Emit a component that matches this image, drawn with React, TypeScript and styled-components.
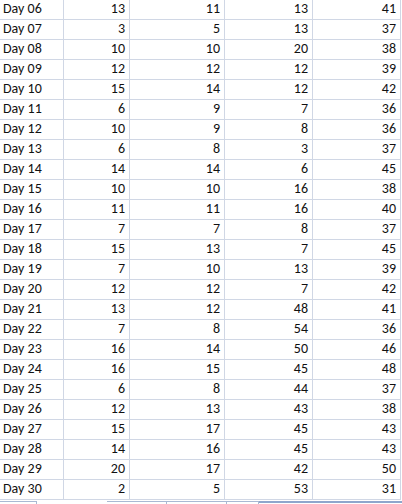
import React from "react";
import styled, { createGlobalStyle } from "styled-components";

const Global = createGlobalStyle`
  html, body { margin: 0; padding: 0; background: #fff; }
  body { font-family: Carlito, Lato, "Liberation Sans", sans-serif; }
`;

const data: [string, number, number, number, number][] = [
  ["Day 06", 13, 11, 13, 41],
  ["Day 07", 3, 5, 13, 37],
  ["Day 08", 10, 10, 20, 38],
  ["Day 09", 12, 12, 12, 39],
  ["Day 10", 15, 14, 12, 42],
  ["Day 11", 6, 9, 7, 36],
  ["Day 12", 10, 9, 8, 36],
  ["Day 13", 6, 8, 3, 37],
  ["Day 14", 14, 14, 6, 45],
  ["Day 15", 10, 10, 16, 38],
  ["Day 16", 11, 11, 16, 40],
  ["Day 17", 7, 7, 8, 37],
  ["Day 18", 15, 13, 7, 45],
  ["Day 19", 7, 10, 13, 39],
  ["Day 20", 12, 12, 7, 42],
  ["Day 21", 13, 12, 48, 41],
  ["Day 22", 7, 8, 54, 36],
  ["Day 23", 16, 14, 50, 46],
  ["Day 24", 16, 15, 45, 48],
  ["Day 25", 6, 8, 44, 37],
  ["Day 26", 12, 13, 43, 38],
  ["Day 27", 15, 17, 45, 43],
  ["Day 28", 14, 16, 45, 43],
  ["Day 29", 20, 17, 42, 50],
  ["Day 30", 2, 5, 53, 31],
];

const Sheet = styled.div`
  width: 402px;
  height: 504px;
  overflow: hidden;
  display: flex;
  flex-direction: column;
`;

const Grid = styled.div`
  display: grid;
  grid-template-columns: 64px 66px 95px 88px 88px;
  grid-auto-rows: 20px;
`;

const Cell = styled.div<{ $num?: boolean }>`
  box-sizing: border-box;
  border-right: 1px solid #d0d7e5;
  border-bottom: 1px solid #d0d7e5;
  display: flex;
  align-items: flex-end;
  justify-content: ${(p) => (p.$num ? "flex-end" : "flex-start")};
  padding: 0 ${(p) => (p.$num ? "4px" : "0")} 2px ${(p) => (p.$num ? "0" : "3px")};
  font-size: 14px;
  line-height: 16px;
  color: #111;
  white-space: nowrap;
`;

const TabBar = styled.div`
  display: flex;
  height: 4px;
  margin-top: 1px;
`;

const Tab = styled.div<{ $w: number; $gap?: number }>`
  box-sizing: border-box;
  width: ${(p) => p.$w}px;
  margin-left: ${(p) => p.$gap ?? 0}px;
  border-top: 1px solid #a9b9d3;
  border-right: 1px solid #a9b9d3;
`;

const TabRest = styled.div`
  flex: 1;
  border-top: 2px solid #8ea6cc;
`;

export default function App() {
  return (
    <Sheet>
      <Global />
      <Grid>
        {data.map((r) => (
          <React.Fragment key={r[0]}>
            <Cell>{r[0]}</Cell>
            <Cell $num>{r[1]}</Cell>
            <Cell $num>{r[2]}</Cell>
            <Cell $num>{r[3]}</Cell>
            <Cell $num>{r[4]}</Cell>
          </React.Fragment>
        ))}
      </Grid>
      <TabBar>
        <Tab $w={37} />
        <Tab $w={60} $gap={70} />
        <Tab $w={60} />
        <Tab $w={32} />
        <TabRest />
      </TabBar>
    </Sheet>
  );
}
